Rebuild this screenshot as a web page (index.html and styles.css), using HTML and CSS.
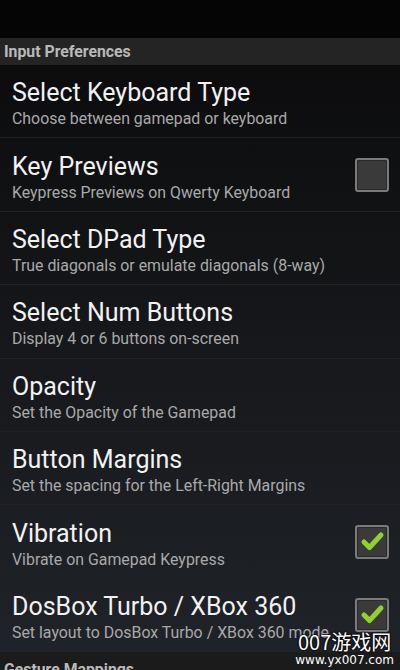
FILE: index.html
```html
<!DOCTYPE html>
<html lang="en">
<head>
    <meta charset="UTF-8">
    <meta name="viewport" content="width=device-width, initial-scale=1.0">
    <title>Input Preferences</title>
    <link rel="stylesheet" href="styles.css">
</head>
<body>
    <div class="status-bar"></div>
    <div class="prefs">
        <div class="category">Input Preferences</div>

        <div class="pref">
            <div class="pref-text">
                <div class="pref-title">Select Keyboard Type</div>
                <div class="pref-summary">Choose between gamepad or keyboard</div>
            </div>
        </div>

        <div class="pref">
            <div class="pref-text">
                <div class="pref-title">Key Previews</div>
                <div class="pref-summary">Keypress Previews on Qwerty Keyboard</div>
            </div>
            <div class="checkbox"></div>
        </div>

        <div class="pref">
            <div class="pref-text">
                <div class="pref-title">Select DPad Type</div>
                <div class="pref-summary">True diagonals or emulate diagonals (8-way)</div>
            </div>
        </div>

        <div class="pref">
            <div class="pref-text">
                <div class="pref-title">Select Num Buttons</div>
                <div class="pref-summary">Display 4 or 6 buttons on-screen</div>
            </div>
        </div>

        <div class="pref">
            <div class="pref-text">
                <div class="pref-title">Opacity</div>
                <div class="pref-summary">Set the Opacity of the Gamepad</div>
            </div>
        </div>

        <div class="pref">
            <div class="pref-text">
                <div class="pref-title">Button Margins</div>
                <div class="pref-summary">Set the spacing for the Left-Right Margins</div>
            </div>
        </div>

        <div class="pref">
            <div class="pref-text">
                <div class="pref-title">Vibration</div>
                <div class="pref-summary">Vibrate on Gamepad Keypress</div>
            </div>
            <div class="checkbox">
                <svg width="30" height="30" viewBox="0 0 30 30"><polyline points="7,15 12.5,20.5 24,8" /></svg>
            </div>
        </div>

        <div class="pref">
            <div class="pref-text">
                <div class="pref-title">DosBox Turbo / XBox 360</div>
                <div class="pref-summary">Set layout to DosBox Turbo / XBox 360 mode</div>
            </div>
            <div class="checkbox">
                <svg width="30" height="30" viewBox="0 0 30 30"><polyline points="7,15 12.5,20.5 24,8" /></svg>
            </div>
        </div>

        <div class="category category-bottom">Gesture Mappings</div>
    </div>

    <div class="watermark">
        <div class="wm-name">007游戏网</div>
        <div class="wm-url">www.yx007.com</div>
    </div>
</body>
</html>
```

FILE: styles.css
```css
body {
    margin: 0;
    width: 400px;
    height: 670px;
    overflow: hidden;
    font-family: Roboto, "Noto Sans", sans-serif;
    background: #050505;
    position: relative;
}

.status-bar {
    height: 38px;
    background: #050505;
}

.prefs {
    background: linear-gradient(to bottom, #0b0b0c 0%, #16181b 50%, #202329 100%);
    height: 632px;
}

.category {
    height: 27px;
    line-height: 27px;
    padding-left: 4px;
    background: #242424;
    color: #b9b9b9;
    font-size: 15.8px;
    font-weight: bold;
}

.category-bottom {
    background: #1b1b1b;
    line-height: 36px;
    height: 20px;
    overflow: hidden;
}

.pref {
    display: flex;
    align-items: center;
    height: 73.4px;
    box-sizing: border-box;
    padding: 0 11px 0 12px;
    border-bottom: 1px solid #1f2124;
}

.pref:nth-last-child(2) {
    border-bottom: none;
}

.pref-text {
    flex: 1;
    min-width: 0;
    white-space: nowrap;
    overflow: hidden;
    padding-top: 6px;
}

.pref-title {
    color: #f2f2f2;
    font-size: 25px;
    line-height: 28px;
}

.pref-summary {
    color: #a9a9a9;
    font-size: 15.9px;
    line-height: 20px;
    margin-top: 2px;
}

.checkbox {
    width: 30px;
    height: 30px;
    flex: none;
    border: 2px solid #7b7b7b;
    border-radius: 3px;
    background: #3a3a3a;
    box-shadow: inset 0 0 0 1px #2a2a2a;
}

.checkbox svg {
    display: block;
}

.checkbox polyline {
    fill: none;
    stroke: #8ed22b;
    stroke-width: 5;
    stroke-linecap: round;
    stroke-linejoin: round;
}

.watermark {
    position: absolute;
    right: 6px;
    bottom: 2px;
    text-align: center;
    color: #fff;
}

.wm-name {
    font-family: "Noto Sans CJK SC", sans-serif;
    font-size: 20px;
    line-height: 22px;
    text-shadow: 0 0 2px #000, 0 0 2px #000, 0 0 1px #000;
}

.wm-url {
    font-family: "DejaVu Sans", sans-serif;
    font-size: 12px;
    line-height: 15px;
}
```
